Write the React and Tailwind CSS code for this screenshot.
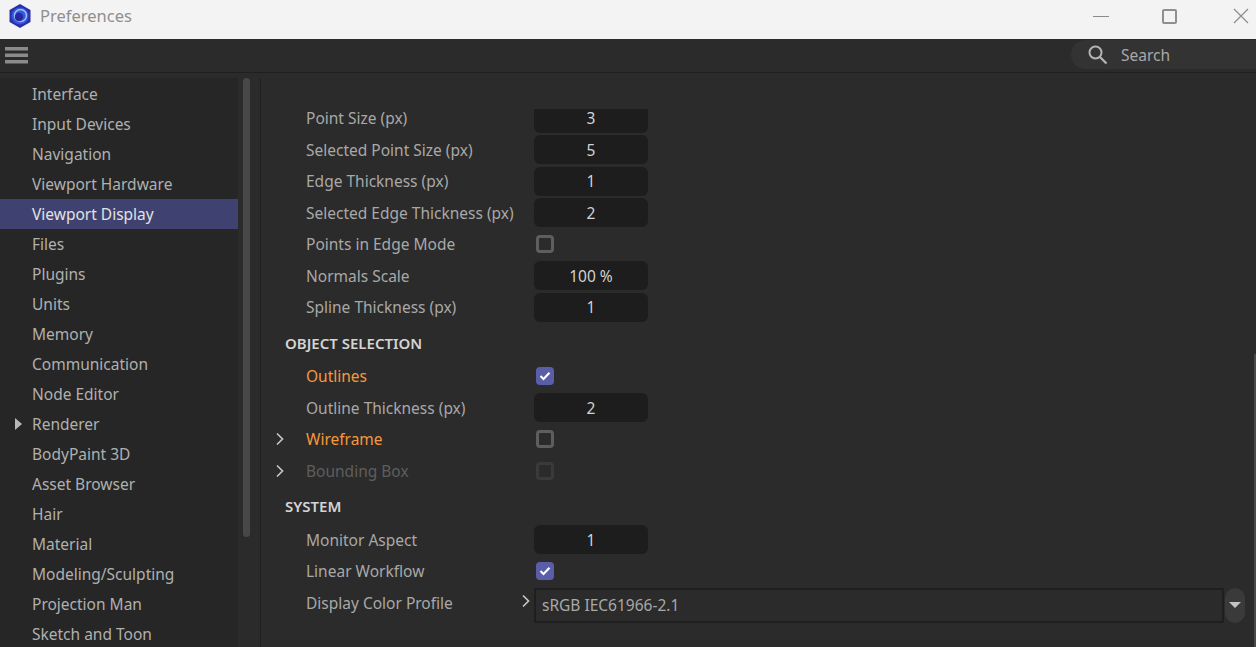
const menu = [
  "Interface", "Input Devices", "Navigation", "Viewport Hardware", "Viewport Display", "Files", "Plugins", "Units",
  "Memory", "Communication", "Node Editor", "Renderer", "BodyPaint 3D", "Asset Browser", "Hair", "Material",
  "Modeling/Sculpting", "Projection Man", "Sketch and Toon",
];

function Logo() {
  return (
    <svg width="24" height="26" viewBox="0 0 24 26" className="ml-[8px] shrink-0">
      <path d="M12 1 L22.5 7 V19 L12 25 L1.5 19 V7 Z" fill="#2b2fa8" />
      <circle cx="12" cy="13" r="8.5" fill="#3558dc" />
      <circle cx="12.5" cy="12.5" r="6" fill="none" stroke="#9cc0f8" strokeWidth="1.5" />
      <circle cx="11" cy="14" r="4.2" fill="#2628a0" />
    </svg>
  );
}

function Chevron({ className }) {
  return (
    <svg width="10" height="14" viewBox="0 0 10 14" className={className}>
      <path d="M2 1.5 L7.5 7 L2 12.5" fill="none" stroke="#c4c4c4" strokeWidth="1.7" />
    </svg>
  );
}

function Field({ value }) {
  return (
    <div className="w-[114px] h-[29px] rounded-[6px] bg-[#1d1d1d] flex items-center justify-center text-[#d2d2d2] leading-[18px]">
      {value}
    </div>
  );
}

function Check({ checked, disabled }) {
  if (checked) {
    return (
      <div className="ml-[2px] w-[18px] h-[18px] rounded-[4px] bg-[#5a5ea8] flex items-center justify-center">
        <svg width="12" height="10" viewBox="0 0 12 10">
          <path d="M1.5 5 L4.5 8 L10.5 1.8" fill="none" stroke="#ffffff" strokeWidth="2.1" />
        </svg>
      </div>
    );
  }
  return (
    <div className={`ml-[2px] w-[18px] h-[18px] rounded-[4px] border-[3px] ${disabled ? "border-[#3a3a3a]" : "border-[#5e5e5e]"}`} />
  );
}

function Row({ label, tone = "text-[#a8a8a8]", arrow, children }) {
  return (
    <div className="h-[31.5px] flex items-center">
      <div className="w-[21px] shrink-0 -ml-[10px] mr-[10px] flex items-center justify-start">
        {arrow && <Chevron />}
      </div>
      <div className={`w-[228px] shrink-0 leading-[18px] ${tone}`}>{label}</div>
      {children}
    </div>
  );
}

function Heading({ children }) {
  return <div className="h-[37.5px] pt-[2.5px] flex items-center font-semibold text-[15px] text-[#d4d4d4]">{children}</div>;
}

export default function App() {
  return (
    <div className="w-[1256px] h-[647px] overflow-hidden flex flex-col bg-[#2b2b2b] text-[15.5px] font-['Noto_Sans',sans-serif]">
      <header className="h-[39px] shrink-0 bg-[#f3f3f3] flex items-center pb-[7px]">
        <Logo />
        <span className="ml-[8px] text-[#8f8f8f] text-[16.5px]">Preferences</span>
        <div className="ml-auto flex items-center">
          <div className="w-[16px] h-[1px] bg-[#8a8a8a] mr-[53px]" />
          <div className="w-[15px] h-[15px] rounded-[2px] border-2 border-[#8f8f8f] mr-[56px]" />
          <svg width="16" height="16" viewBox="0 0 16 16" className="mr-[7px]">
            <path d="M1 1 L15 15 M15 1 L1 15" stroke="#8f8f8f" strokeWidth="1.3" />
          </svg>
        </div>
      </header>

      <div className="h-[34px] shrink-0 border-b border-[#1f1f1f] flex items-center justify-between">
        <svg width="23" height="17" viewBox="0 0 23 17" className="ml-[5px]">
          <path d="M0 0 H23 V3.5 H0 Z M0 6.5 H23 V10 H0 Z M0 13 H23 V16.5 H0 Z" fill="#8b8b8b" />
        </svg>
        <div className="w-[185px] h-[29px] rounded-l-[15px] bg-[#333333] flex items-center pl-[17px] -mt-[2px]">
          <svg width="20" height="20" viewBox="0 0 20 20">
            <circle cx="7.5" cy="7.5" r="6" fill="none" stroke="#b5b5b5" strokeWidth="2" />
            <path d="M12 12 L18.5 18.5" stroke="#b5b5b5" strokeWidth="2.2" />
          </svg>
          <span className="ml-[13px] mt-[2px] text-[#a8a8a8]">Search</span>
        </div>
      </div>

      <div className="flex-1 flex min-h-0 pt-[5px]">
        <nav className="w-[238px] shrink-0 bg-[#262626] pt-[1px] overflow-hidden">
          {menu.map((item) => (
            <div
              key={item}
              className={`h-[30px] pl-[32px] pt-[2px] flex items-center relative ${item === "Viewport Display" ? "bg-[#3f4270] text-[#e2e2e2]" : "text-[#b0b0b0]"}`}
            >
              {item === "Renderer" && (
                <span className="absolute left-[15px] top-[9px] w-0 h-0 border-y-[6px] border-y-transparent border-l-[7px] border-l-[#b8b8b8]" />
              )}
              {item}
            </div>
          ))}
        </nav>
        <div className="w-[23px] shrink-0 border-r border-[#202020] pl-[5px]">
          <div className="w-[7px] h-[459px] rounded-full bg-[#484848]" />
        </div>

        <main className="flex-1 relative overflow-hidden">
          <div className="mt-[30.5px] h-full overflow-hidden">
            <div className="-mt-[6px] pl-[24px]">
              <Row label="Point Size (px)"><Field value="3" /></Row>
              <Row label="Selected Point Size (px)"><Field value="5" /></Row>
              <Row label="Edge Thickness (px)"><Field value="1" /></Row>
              <Row label="Selected Edge Thickness (px)"><Field value="2" /></Row>
              <Row label="Points in Edge Mode"><Check /></Row>
              <Row label="Normals Scale"><Field value="100 %" /></Row>
              <Row label="Spline Thickness (px)"><Field value="1" /></Row>
              <Heading>OBJECT SELECTION</Heading>
              <Row label="Outlines" tone="text-[#f7983c]"><Check checked /></Row>
              <Row label="Outline Thickness (px)"><Field value="2" /></Row>
              <Row label="Wireframe" tone="text-[#f7983c]" arrow><Check /></Row>
              <Row label="Bounding Box" tone="text-[#5e5e5e]" arrow><Check disabled /></Row>
              <Heading>SYSTEM</Heading>
              <Row label="Monitor Aspect"><Field value="1" /></Row>
              <Row label="Linear Workflow"><Check checked /></Row>
              <div className="h-[31.5px] flex items-center">
                <div className="w-[21px] shrink-0" />
                <div className="w-[228px] shrink-0 leading-[18px] text-[#a8a8a8]">Display Color Profile</div>
                <Chevron className="absolute left-[260px] -mt-[3px]" />
                <div className="w-[690px] h-[35px] mt-[5px] border-2 border-[#1f1f1f] flex items-center pl-[6px] pt-[1px] text-[#a8a8a8] shrink-0">
                  sRGB IEC61966-2.1
                </div>
                <div className="ml-[1px] w-[20px] h-[35px] mt-[5px] rounded-full bg-[#3a3a3a] flex items-center justify-center shrink-0">
                  <span className="w-0 h-0 border-x-[6px] border-x-transparent border-t-[6px] border-t-[#c4c4c4]" />
                </div>
              </div>
            </div>
          </div>
          <div className="absolute right-0 top-[276px] bottom-0 w-[2px] bg-[#4a4a4a]" />
        </main>
      </div>
    </div>
  );
}
